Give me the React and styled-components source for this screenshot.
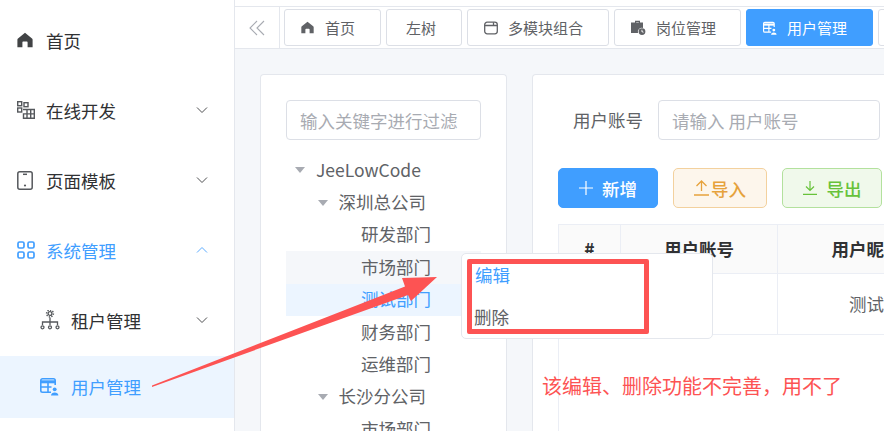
import React from 'react'
import styled, { createGlobalStyle } from 'styled-components'

const Global = createGlobalStyle`
  html, body {
    margin: 0;
    padding: 0;
    width: 884px;
    height: 431px;
    overflow: hidden;
    background: #fff;
    font-family: "Noto Sans CJK SC", "Liberation Sans", sans-serif;
    color: #606266;
  }
  * { box-sizing: border-box; }
`

const Page = styled.div`
  position: relative;
  display: flex;
  width: 884px;
  height: 431px;
  overflow: hidden;
`

const Sidebar = styled.aside`
  flex: 0 0 235px;
  padding-top: 6px;
  border-right: 1px solid #e4e7ed;
  background: #fff;
`

const MenuItem = styled.div`
  display: flex;
  align-items: center;
  height: ${p => (p.$selected ? 62 : 70)}px;
  padding-left: ${p => (p.$sub ? 40 : 17)}px;
  padding-right: 26px;
  padding-bottom: 2px;
  font-size: 17.5px;
  color: ${p => (p.$active ? '#409eff' : '#303133')};
  background: ${p => (p.$selected ? '#ecf5ff' : 'transparent')};
`

const MenuIcon = styled.span`
  display: flex;
  flex: 0 0 ${p => (p.$sub ? 31 : 29)}px;
  color: ${p => p.$color || 'inherit'};
`

const MenuLabel = styled.span`
  flex: 1;
`

const Main = styled.main`
  flex: 1;
  min-width: 0;
  display: flex;
  flex-direction: column;
  background: #f5f7fa;
`

const TopGap = styled.div`
  flex: 0 0 6px;
  background: #fff;
`

const TabBar = styled.div`
  flex: 0 0 43px;
  display: flex;
  align-items: stretch;
  background: #fff;
  border-top: 1px solid #e4e7ed;
  border-bottom: 1px solid #e4e7ed;
`

const Collapse = styled.div`
  flex: 0 0 45px;
  display: flex;
  align-items: center;
  justify-content: center;
  border-right: 1px solid #e4e7ed;
  color: #a8abb2;
`

const Tabs = styled.div`
  display: flex;
  gap: 5px;
  padding: 2px 0 2px 4px;
`

const Tab = styled.div`
  flex: 0 0 ${p => p.$w}px;
  display: flex;
  align-items: center;
  gap: 10px;
  padding-left: ${p => (p.$plain ? 19 : 16)}px;
  font-size: 15px;
  border-radius: 3px;
  border: 1px solid ${p => (p.$active ? '#409eff' : '#dcdfe6')};
  background: ${p => (p.$active ? '#409eff' : '#fff')};
  color: ${p => (p.$active ? '#fff' : '#606266')};
`

const TabIcon = styled.span`
  display: flex;
  flex: 0 0 14px;
`

const Content = styled.div`
  flex: 1;
  display: flex;
  gap: 25px;
  padding: 25px 0 0 25px;
  min-height: 0;
`

const Panel = styled.section`
  flex: 0 0 ${p => p.$w}px;
  background: #fff;
  border: 1px solid #e4e7ed;
  border-bottom: 0;
  border-radius: 4px 4px 0 0;
  padding: 25px;
`

const Input = styled.div`
  display: flex;
  align-items: center;
  width: ${p => p.$w}px;
  height: 40px;
  padding: 0 13px;
  font-size: 17.5px;
  color: #a8abb2;
  border: 1px solid #dcdfe6;
  border-radius: 4px;
  background: #fff;
`

const Tree = styled.div`
  margin-top: 14px;
`

const TreeRow = styled.div`
  display: flex;
  align-items: center;
  height: 32.4px;
  padding-left: ${p => p.$level * 22.5 + 9}px;
  padding-bottom: 2px;
  font-size: 17.5px;
  color: ${p => (p.$current ? '#409eff' : '#606266')};
  background: ${p => (p.$current ? '#ecf5ff' : p.$hover ? '#f5f7fa' : 'transparent')};
`

const Caret = styled.i`
  flex: 0 0 21px;
  height: 0;
  &::before {
    content: '';
    display: block;
    width: 0;
    height: 0;
    margin-top: -2px;
    border-left: 5px solid transparent;
    border-right: 5px solid transparent;
    border-top: 6px solid ${p => (p.$leaf ? 'transparent' : '#a8abb2')};
  }
`

const FilterRow = styled.div`
  display: flex;
  align-items: center;
  padding-left: 15px;
`

const FilterLabel = styled.label`
  flex: 0 0 85px;
  padding-bottom: 1px;
  font-size: 17.5px;
  color: #606266;
`

const Actions = styled.div`
  display: flex;
  gap: 15px;
  margin-top: 28px;
`

const Button = styled.div`
  flex: 0 0 ${p => p.$w}px;
  height: 40px;
  display: flex;
  align-items: center;
  justify-content: center;
  gap: ${p => p.$gap}px;
  font-size: 17.5px;
  font-weight: 500;
  border-radius: 5px;
  border: 1px solid ${p => p.$border};
  background: ${p => p.$bg};
  color: ${p => p.$color};
`

const Table = styled.div`
  margin-top: 16px;
  width: 500px;
  height: 300px;
  border-left: 1px solid #ebeef5;
`

const TableRow = styled.div`
  display: grid;
  grid-template-columns: 62px 157px 178px 103px;
  height: ${p => p.$h}px;
  border-top: ${p => (p.$head ? '1px solid #ebeef5' : '0')};
  border-bottom: 1px solid #ebeef5;
  background: ${p => (p.$head ? '#fafafa' : '#fff')};
`

const Cell = styled.div`
  display: flex;
  align-items: center;
  justify-content: center;
  padding-bottom: 1px;
  white-space: nowrap;
  border-right: 1px solid #ebeef5;
  font-size: 17.5px;
  font-weight: ${p => (p.$head ? 700 : 400)};
  color: ${p => (p.$head ? '#303133' : '#606266')};
`

const ContextMenu = styled.div`
  position: absolute;
  left: 461px;
  top: 253px;
  width: 252px;
  height: 86px;
  background: #fff;
  border: 1px solid #e4e7ed;
  border-radius: 5px;
  font-size: 17.5px;
  color: #606266;
`

const ContextItem = styled.div`
  position: absolute;
  left: ${p => p.$x}px;
  top: ${p => p.$y}px;
  line-height: 24px;
  color: ${p => (p.$blue ? '#409eff' : '#606266')};
`

const RedBox = styled.div`
  position: absolute;
  left: 467px;
  top: 259px;
  width: 182px;
  height: 75px;
  border: 5px solid #fd5353;
  border-radius: 2px;
`

const Note = styled.div`
  position: absolute;
  left: 542px;
  top: 372px;
  font-size: 20px;
  line-height: 28px;
  color: #fd5353;
  white-space: nowrap;
`

const Arrow = styled.svg`
  position: absolute;
  left: 0;
  top: 0;
`

const Chevron = ({ up }) => (
  <svg width="12" height="8" viewBox="0 0 12 8" fill="none" stroke="currentColor" strokeWidth="1" opacity="0.85">
    <path d={up ? 'M1 6.500 6 1.500l5 5' : 'M1 1.500l5 5 5-5'} />
  </svg>
)

const HomeIcon = ({ size = 16 }) => (
  <svg width={size} height={size} viewBox="0 0 16 16" fill="currentColor">
    <path d="M8 .8 1 6.400c-.4.4-.6.8-.6 1.400v7.400h5V10.600c0-.6.4-1 1-1h3.200c.6 0 1 .4 1 1v4.600h5V7.800c0-.6-.2-1-.6-1.400z" />
  </svg>
)

const GridIcon = () => (
  <svg width="18" height="18" viewBox="0 0 18 18" fill="none" stroke="currentColor" strokeWidth="1.400">
    <rect x="0.700" y="0.700" width="4" height="4" />
    <rect x="7" y="1.700" width="4" height="4" />
    <rect x="0.700" y="7" width="4" height="4" />
    <path d="M6 8.500h11.300v8.800H6.500v-4.400h11M10 8.500v8.800M13.700 8.500v8.800" />
  </svg>
)

const TabletIcon = () => (
  <svg width="16" height="19" viewBox="0 0 16 19" fill="none" stroke="currentColor" strokeWidth="1.500">
    <rect x="0.800" y="0.800" width="14.400" height="17.400" rx="2" />
    <path d="M6 3.300h4" />
    <circle cx="8" cy="14.500" r="1.100" fill="currentColor" stroke="none" />
  </svg>
)

const AppsIcon = () => (
  <svg width="18" height="18" viewBox="0 0 18 18" fill="none" stroke="currentColor" strokeWidth="1.700">
    <rect x="1" y="1" width="6" height="6" rx="1.500" />
    <rect x="11" y="1" width="6" height="6" rx="1.500" />
    <rect x="1" y="11" width="6" height="6" rx="1.500" />
    <rect x="11" y="11" width="6" height="6" rx="1.500" />
  </svg>
)

const OrgIcon = () => (
  <svg width="20" height="20" viewBox="0 0 20 20" fill="none" stroke="currentColor" strokeWidth="1.300">
    <circle cx="10" cy="3.500" r="1.900" />
    <circle cx="10" cy="3.500" r="3.400" strokeDasharray="1.300 1.300" strokeWidth="1.500" />
    <path d="M10 7.500v7.500M2.500 15v-3h15v3" />
    <circle cx="2.500" cy="17.300" r="1.500" />
    <circle cx="10" cy="17.300" r="1.500" />
    <circle cx="17.500" cy="17.300" r="1.500" />
  </svg>
)

const UserTableIcon = ({ size = 19 }) => (
  <svg width={size} height={size} viewBox="0 0 19 19" fill="none" stroke="currentColor" strokeWidth="1.600">
    <path d="M11 15.200H2.500a1.700 1.700 0 0 1-1.700-1.700V3.500a1.700 1.700 0 0 1 1.700-1.700h11a1.700 1.700 0 0 1 1.700 1.700V8" />
    <path d="M1 4.800h14" strokeWidth="3" />
    <path d="M8 5v10M1 10h10.500" />
    <circle cx="14.700" cy="12.300" r="1.900" fill="currentColor" stroke="none" />
    <path d="M11 18.500c0-1.900 1.700-3 3.700-3s3.700 1.100 3.700 3z" fill="currentColor" stroke="none" />
  </svg>
)

const ModuleIcon = () => (
  <svg width="14" height="14" viewBox="0 0 14 14" fill="none" stroke="currentColor" strokeWidth="1.300">
    <rect x="0.700" y="1.200" width="12.600" height="11.600" rx="2.500" />
    <path d="M.7 4.500h12.600M9.500 1.200v3.300" />
  </svg>
)

const PostIcon = () => (
  <svg width="15" height="15" viewBox="0 0 15 15" fill="currentColor">
    <path d="M4 2.500V.8h5v1.700h3V8a4 4 0 0 0-5 5H0V2.500zm1.200 0h2.600V2H5.200z" />
    <path fillRule="evenodd" d="M11 8.200a3.400 3.400 0 1 1 0 6.800 3.400 3.400 0 0 1 0-6.800zm-.5 1.500v2.100l1.700 1 .5-.7-1.300-.8V9.700z" />
  </svg>
)

const Plus = () => (
  <svg width="14" height="14" viewBox="0 0 14 14" stroke="currentColor" strokeWidth="1.200">
    <path d="M7 0v14M0 7h14" />
  </svg>
)

const UploadIcon = () => (
  <svg width="15" height="16" viewBox="0 0 15 16" fill="none" stroke="currentColor" strokeWidth="1.300">
    <path d="M7.500 11V1M2.500 6l5-5 5 5M0 15h15" />
  </svg>
)

const DownloadIcon = () => (
  <svg width="14" height="14" viewBox="0 0 14 14" fill="none" stroke="currentColor" strokeWidth="1.200">
    <path d="M7 0v9M3 5.500 7 9.500l4-4M0 13.400h14" />
  </svg>
)

const treeRows = [
  { label: 'JeeLowCode', level: 0, open: true },
  { label: '深圳总公司', level: 1, open: true },
  { label: '研发部门', level: 2 },
  { label: '市场部门', level: 2, hover: true },
  { label: '测试部门', level: 2, current: true },
  { label: '财务部门', level: 2 },
  { label: '运维部门', level: 2 },
  { label: '长沙分公司', level: 1, open: true },
  { label: '市场部门', level: 2 },
]

const tabs = [
  { label: '首页', w: 97, icon: <HomeIcon size={13} /> },
  { label: '左树', w: 76 },
  { label: '多模块组合', w: 142, icon: <ModuleIcon /> },
  { label: '岗位管理', w: 127, icon: <PostIcon /> },
  { label: '用户管理', w: 127, icon: <UserTableIcon size={14} />, active: true },
  { label: '', w: 60 },
]

export default function App() {
  return (
    <Page>
      <Global />
      <Sidebar>
        <MenuItem><MenuIcon $color="#414345"><HomeIcon /></MenuIcon><MenuLabel>首页</MenuLabel></MenuItem>
        <MenuItem><MenuIcon $color="#55585c"><GridIcon /></MenuIcon><MenuLabel>在线开发</MenuLabel><Chevron /></MenuItem>
        <MenuItem><MenuIcon $color="#55585c"><TabletIcon /></MenuIcon><MenuLabel>页面模板</MenuLabel><Chevron /></MenuItem>
        <MenuItem $active><MenuIcon><AppsIcon /></MenuIcon><MenuLabel>系统管理</MenuLabel><Chevron up /></MenuItem>
        <MenuItem $sub><MenuIcon $sub $color="#55585c"><OrgIcon /></MenuIcon><MenuLabel>租户管理</MenuLabel><Chevron /></MenuItem>
        <MenuItem $sub $active $selected><MenuIcon $sub><UserTableIcon /></MenuIcon><MenuLabel>用户管理</MenuLabel></MenuItem>
      </Sidebar>
      <Main>
        <TopGap />
        <TabBar>
          <Collapse>
            <svg width="16" height="16" viewBox="0 0 16 16" fill="none" stroke="currentColor" strokeWidth="1.100">
              <path d="M8 1 1 8l7 7M15 1 8 8l7 7" />
            </svg>
          </Collapse>
          <Tabs>
            {tabs.map((t, i) => (
              <Tab key={i} $w={t.w} $active={t.active} $plain={!t.icon}>
                {t.icon && <TabIcon>{t.icon}</TabIcon>}
                {t.label}
              </Tab>
            ))}
          </Tabs>
        </TabBar>
        <Content>
          <Panel $w={247}>
            <Input $w={195}>输入关键字进行过滤</Input>
            <Tree>
              {treeRows.map((r, i) => (
                <TreeRow key={i} $level={r.level} $hover={r.hover} $current={r.current}>
                  <Caret $leaf={!r.open} />{r.label}
                </TreeRow>
              ))}
            </Tree>
          </Panel>
          <Panel $w={500}>
            <FilterRow>
              <FilterLabel>用户账号</FilterLabel>
              <Input $w={222}>请输入 用户账号</Input>
            </FilterRow>
            <Actions>
              <Button $w={100} $gap={9} $bg="#409eff" $border="#409eff" $color="#fff"><Plus />新增</Button>
              <Button $w={94} $gap={2} $bg="#fdf6ec" $border="#f3d19e" $color="#e6a23c"><UploadIcon />导入</Button>
              <Button $w={100} $gap={10} $bg="#f0f9eb" $border="#b3e19d" $color="#67c23a"><DownloadIcon />导出</Button>
            </Actions>
            <Table>
              <TableRow $head $h={50}>
                <Cell $head>#</Cell>
                <Cell $head>用户账号</Cell>
                <Cell $head>用户昵称</Cell>
              </TableRow>
              <TableRow $h={61}>
                <Cell />
                <Cell />
                <Cell>测试</Cell>
              </TableRow>
            </Table>
          </Panel>
        </Content>
      </Main>
      <ContextMenu>
        <ContextItem $blue $x={13} $y={9}>编辑</ContextItem>
        <ContextItem $x={12} $y={51}>删除</ContextItem>
      </ContextMenu>
      <RedBox />
      <Note>该编辑、删除功能不完善，用不了</Note>
      <Arrow width="884" height="431" viewBox="0 0 884 431">
        <path fill="#fd5353" d="M152 385.500 405 286.500 402 278 437 277 411 301 408 295 152 387z" />
      </Arrow>
    </Page>
  )
}
